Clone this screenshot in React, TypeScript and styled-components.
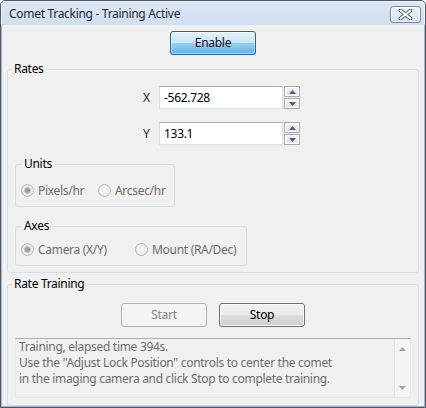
import styled, { createGlobalStyle } from "styled-components"

const GlobalStyle = createGlobalStyle`
  * { box-sizing: border-box; }
  body {
    margin: 0;
    background: #ffffff;
  }
`

const UpArrow = ({ color }: { color: string }) => (
  <svg width="7" height="4" viewBox="0 0 7 4">
    <polygon points="0,4 7,4 3.5,0" fill={color} />
  </svg>
)

const DownArrow = ({ color }: { color: string }) => (
  <svg width="7" height="4" viewBox="0 0 7 4">
    <polygon points="0,0 7,0 3.5,4" fill={color} />
  </svg>
)

const CloseGlyph = () => (
  <svg width="15" height="11" viewBox="0 0 15 11">
    <path d="M2.5 1.5 L12.5 9.5 M12.5 1.5 L2.5 9.5" stroke="#5d6878" strokeWidth="4" strokeLinecap="round" />
    <path d="M2.5 1.5 L12.5 9.5 M12.5 1.5 L2.5 9.5" stroke="#ffffff" strokeWidth="2" strokeLinecap="round" />
  </svg>
)

const Spinner = () => (
  <SpinBox>
    <SpinButton><UpArrow color="#4d6185" /></SpinButton>
    <SpinButton><DownArrow color="#4d6185" /></SpinButton>
  </SpinBox>
)

const Radio = ({ label, checked, width }: { label: string; checked?: boolean; width: number }) => (
  <Option $width={width}>
    <RadioCircle>{checked && <RadioDot />}</RadioCircle>
    <span>{label}</span>
  </Option>
)

const App = () => {
  return (
    <>
      <GlobalStyle />
      <Window>
        <TitleBar>
          <Title>Comet Tracking - Training Active</Title>
          <CloseButton><CloseGlyph /></CloseButton>
        </TitleBar>

        <Client>
          <TopRow>
            <Button $variant="blue">Enable</Button>
          </TopRow>

          <Group $mt={7} $pl={7} $pb={6}>
            <Legend $ml={-3}>Rates</Legend>

            <FieldRow $mt={9}>
              <FieldLabel>X</FieldLabel>
              <Input>-562.728</Input>
              <Spinner />
            </FieldRow>
            <FieldRow $mt={11}>
              <FieldLabel>Y</FieldLabel>
              <Input>133.1</Input>
              <Spinner />
            </FieldRow>

            <SubGroup $width={160} $mt={11} $pt={11} $pb={8}>
              <Legend $ml={1}>Units</Legend>
              <RadioRow>
                <Radio label="Pixels/hr" checked width={77} />
                <Radio label="Arcsec/hr" width={60} />
              </RadioRow>
            </SubGroup>

            <SubGroup $width={232} $mt={12} $pt={8} $pb={8}>
              <Legend $ml={1}>Axes</Legend>
              <RadioRow>
                <Radio label="Camera (X/Y)" checked width={114} />
                <Radio label="Mount (RA/Dec)" width={100} />
              </RadioRow>
            </SubGroup>
          </Group>

          <Group $mt={4} $pl={7} $pb={7}>
            <Legend $ml={-3}>Rate Training</Legend>

            <ButtonRow>
              <Button $variant="disabled">Start</Button>
              <Button $variant="normal">Stop</Button>
            </ButtonRow>

            <LogBox>
              <LogText>
                <LogLine>Training, elapsed time 394s.</LogLine>
                <LogLine>Use the "Adjust Lock Position" controls to center the comet</LogLine>
                <LogLine>in the imaging camera and click Stop to complete training.</LogLine>
              </LogText>
              <ScrollTrack>
                <UpArrow color="#a3a3a3" />
                <DownArrow color="#a3a3a3" />
              </ScrollTrack>
            </LogBox>
          </Group>
        </Client>
      </Window>
    </>
  )
}

const Window = styled.div`
  width: 426px;
  height: 408px;
  display: flex;
  flex-direction: column;
  border: 1px solid #4f5866;
  border-radius: 5px 5px 0 0;
  overflow: hidden;
  background: #d7e3f1;
  font-family: "Noto Sans", "Open Sans", sans-serif;
  font-size: 12px;
  letter-spacing: -0.3px;
  color: #000;
`

const TitleBar = styled.div`
  height: 24px;
  display: flex;
  align-items: center;
  justify-content: space-between;
  padding: 0 3px 0 7px;
  background: linear-gradient(#dce7f4, #d1deee);
  border: 1px solid #eef3fa;
  border-bottom: none;
  border-radius: 4px 4px 0 0;
`

const Title = styled.div`
  color: #1e2733;
  line-height: 16px;
  padding-top: 1px;
`

const CloseButton = styled.div`
  width: 31px;
  height: 17px;
  margin-top: 2px;
  display: flex;
  align-items: center;
  justify-content: center;
  border: 1px solid #7a889b;
  border-radius: 3px;
  background: linear-gradient(#eef3f9, #d6dfeb);
  box-shadow: inset 0 0 0 1px rgba(255, 255, 255, 0.6);
`

const Client = styled.div`
  flex: 1;
  display: flex;
  flex-direction: column;
  padding: 0 2px;
  background: #f0f0f0;
  border: 1px solid #a7b4c5;
  border-top: none;
`

const TopRow = styled.div`
  display: flex;
  justify-content: center;
  padding-top: 6px;
`

const Button = styled.div<{ $variant: "blue" | "normal" | "disabled" }>`
  width: 86px;
  height: 24px;
  display: flex;
  align-items: center;
  justify-content: center;
  border-radius: 3px;
  line-height: 16px;
  ${(p) =>
    p.$variant === "blue"
      ? `
    border: 1px solid #2c628b;
    background: linear-gradient(#e5f4fc 0%, #c4e5f6 50%, #98d1ef 50%, #68b3db 100%);
    box-shadow: inset 0 0 0 1px rgba(255,255,255,0.45);
    color: #1a0f24;
  `
      : p.$variant === "normal"
      ? `
    border: 1px solid #707070;
    background: linear-gradient(#f2f2f2 0%, #ebebeb 50%, #dddddd 50%, #cfcfcf 100%);
    box-shadow: inset 0 0 0 1px rgba(255,255,255,0.8);
    color: #000;
  `
      : `
    border: 1px solid #adb2b5;
    background: #f4f4f4;
    color: #838383;
  `}
`

const Group = styled.fieldset<{ $mt: number; $pl: number; $pb: number }>`
  margin: ${(p) => p.$mt}px 3px 0;
  padding: 0 ${(p) => p.$pl}px ${(p) => p.$pb}px;
  min-width: 0;
  border: 1px solid #d5dfe5;
  border-radius: 3px;
`

const SubGroup = styled.fieldset<{ $width: number; $mt: number; $pt: number; $pb: number }>`
  width: ${(p) => p.$width}px;
  margin: ${(p) => p.$mt}px 0 0;
  padding: ${(p) => p.$pt}px 5px ${(p) => p.$pb}px;
  min-width: 0;
  border: 1px solid #d5dfe5;
  border-radius: 3px;
`

const Legend = styled.legend<{ $ml: number }>`
  margin-left: ${(p) => p.$ml}px;
  padding: 0 2px;
  line-height: 14px;
  color: #000;
`

const FieldRow = styled.div<{ $mt: number }>`
  display: flex;
  align-items: center;
  margin: ${(p) => p.$mt}px 0 0 128px;
`

const FieldLabel = styled.div`
  width: 16px;
  color: #1e1e1e;
`

const Input = styled.div`
  width: 124px;
  height: 23px;
  display: flex;
  align-items: center;
  padding-left: 4px;
  background: #ffffff;
  border: 1px solid #dbdfe6;
  border-top-color: #abadb3;
  color: #000;
`

const SpinBox = styled.div`
  display: flex;
  flex-direction: column;
  gap: 1px;
  margin-left: 1px;
  padding: 1px 0;
`

const SpinButton = styled.div`
  width: 16px;
  height: 11px;
  display: flex;
  align-items: center;
  justify-content: center;
  border: 1px solid #a8a8a8;
  background: linear-gradient(#f5f5f5, #e3e3e3);
  box-shadow: inset 0 0 0 1px #ffffff;
`

const RadioRow = styled.div`
  display: flex;
  align-items: center;
  height: 16px;
`

const Option = styled.div<{ $width: number }>`
  width: ${(p) => p.$width}px;
  display: flex;
  align-items: center;
  gap: 4px;
  color: #6d6d6d;
  white-space: nowrap;
`

const RadioCircle = styled.span`
  width: 13px;
  height: 13px;
  flex: none;
  display: flex;
  align-items: center;
  justify-content: center;
  border-radius: 50%;
  border: 1px solid #b8b8b8;
  background: radial-gradient(circle, #f7f7f7 0%, #e6e6e6 100%);
`

const RadioDot = styled.span`
  width: 5px;
  height: 5px;
  border-radius: 50%;
  background: #9c9c9c;
  box-shadow: 0 0 0 1px #c8c8c8;
`

const ButtonRow = styled.div`
  display: flex;
  justify-content: center;
  gap: 12px;
  margin-top: 12px;
`

const LogBox = styled.div`
  height: 60px;
  margin-top: 11px;
  display: flex;
  border: 1px solid #abadb3;
  border-color: #abadb3 #e3e9ef #e3e9ef #e3e9ef;
  background: #f0f0f0;
`

const LogText = styled.div`
  flex: 1;
  display: flex;
  flex-direction: column;
  padding: 0 3px;
  color: #6d6d6d;
`

const LogLine = styled.div`
  line-height: 16px;
  white-space: nowrap;
`

const ScrollTrack = styled.div`
  width: 16px;
  display: flex;
  flex-direction: column;
  align-items: center;
  justify-content: space-between;
  padding: 8px 0 7px;
  background: #f4f4f4;
  border-left: 1px solid #e3e3e3;
`

export default App
